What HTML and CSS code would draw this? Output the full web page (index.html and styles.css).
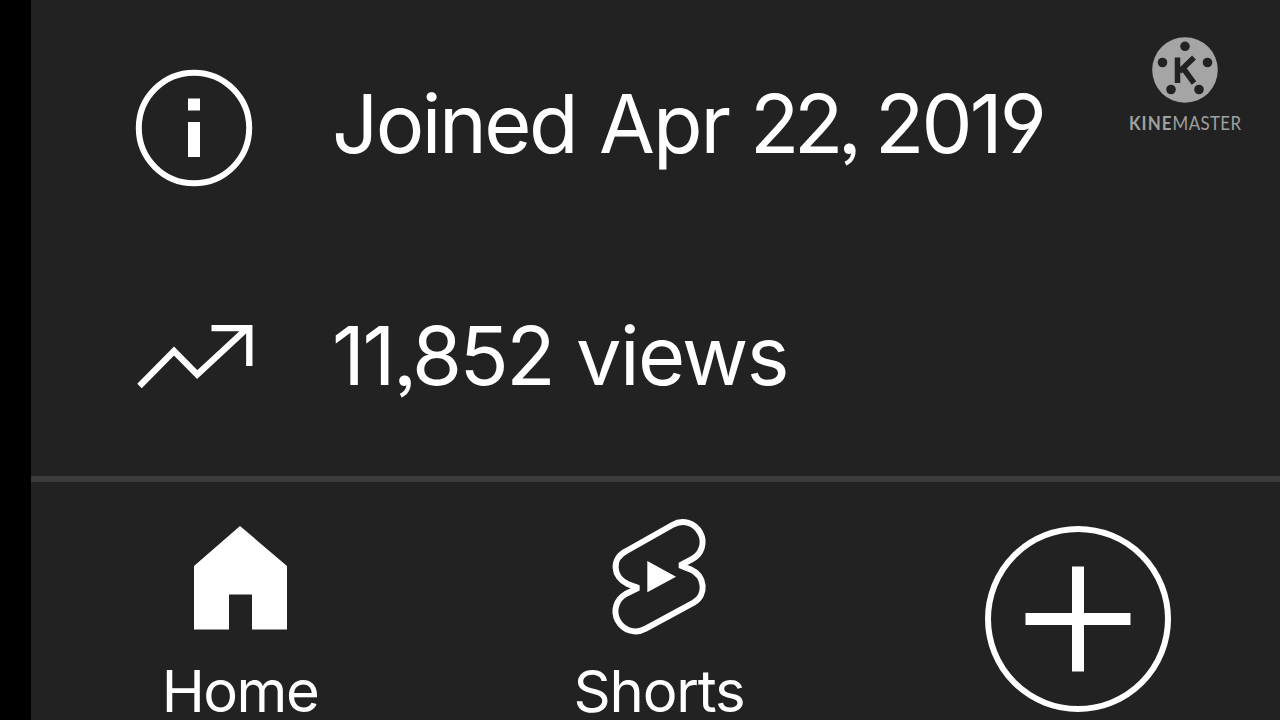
FILE: index.html
```html
<!DOCTYPE html>
<html lang="en">
<head>
<meta charset="utf-8">
<title>Channel details</title>
<link rel="stylesheet" href="styles.css">
</head>
<body>
<main class="screen">
  <section class="details">
    <div class="row">
      <svg class="row-icon" viewBox="0 0 120 120"><circle cx="60" cy="60" r="55.200" fill="none" stroke="#fff" stroke-width="6"/><path fill="#fff" d="M54 30.500h12v12H54zM54 54h12v35H54z"/></svg>
      <p class="row-text"><span class="joined">Joined</span> <span class="month">Apr</span> <span class="day">22,</span> <span class="year">2019</span></p>
    </div>
    <div class="row">
      <svg class="row-icon" viewBox="0 2.500 120 120"><path d="M5.500 88.500L40 53.500L63.200 77L114 30M77.500 30.700H115.300V68.500" fill="none" stroke="#fff" stroke-width="6.300"/></svg>
      <p class="row-text"><span class="count">11,852</span> <span class="views">views</span></p>
    </div>
  </section>
  <nav class="tabs">
    <a class="tab">
      <svg class="tab-icon" viewBox="0 0 140 140"><path fill="#fff" d="M70 16L117 56V119.500H82V84.500H59V119.500H24V56z"/></svg>
      <span class="tab-label home">Home</span>
    </a>
    <a class="tab">
      <svg class="tab-icon" viewBox="-2 15 420 420"><path d="M110 138L248 60C280 41 316 54 332 84C347 113 336 147 308 162L276 179V183L302 193C347 213 352 270 312 293L168 371C136 389 100 376 84 346C69 317 80 283 108 267L141 251V247L114 237C69 217 64 160 110 138Z" fill="none" stroke="#fff" stroke-width="18"/><path fill="#fff" d="M173 168L259 215L173 262z"/></svg>
      <span class="tab-label shorts">Shorts</span>
    </a>
    <a class="tab create">
      <svg class="create-icon" viewBox="0 0 190 190"><circle cx="95" cy="95" r="90" fill="none" stroke="#fff" stroke-width="6"/><path d="M95 42.500V147.500M42.500 95H147.500" stroke="#fff" stroke-width="12"/></svg>
    </a>
  </nav>
  <aside class="watermark">
    <svg class="reel" viewBox="0 0 66 66"><circle cx="33" cy="33" r="32.800" fill="#a5a5a5"/><g fill="#222"><circle cx="33" cy="9.300" r="4.800"/><circle cx="10.500" cy="25.500" r="4.800"/><circle cx="55.500" cy="25.500" r="4.800"/><circle cx="19" cy="52.500" r="4.800"/><circle cx="47" cy="52.500" r="4.800"/></g><path d="M25.500 20.500V46M42 20.500L27.500 34.500M31 31L42 46" fill="none" stroke="#222" stroke-width="5.500"/></svg>
    <span class="brand"><b>KINE</b>MASTER</span>
  </aside>
</main>
</body>
</html>
```
FILE: styles.css
```css
* { box-sizing: border-box; }
body {
  margin: 0;
  background: #000;
  color: #fff;
  font-family: Inter, "Liberation Sans", sans-serif;
}
.screen {
  position: relative;
  width: 1249px;
  height: 720px;
  margin-left: 31px;
  overflow: hidden;
  background: #222;
}
.details {
  height: 482px;
  padding: 12px 0 0 103px;
  border-bottom: 6px solid #3b3b3b;
}
.row {
  display: flex;
  align-items: center;
  height: 232px;
}
.row-icon {
  flex: none;
  width: 120px;
  height: 120px;
}
.row-text {
  display: flex;
  margin: 0 0 8px 78px;
  font-size: 81px;
  font-weight: 400;
  line-height: 100px;
  white-space: nowrap;
  font-feature-settings: "ss01", "ss03";
}
.row-text span { flex: none; }
.joined { width: 267px; letter-spacing: -2.500px; }
.month { width: 151px; letter-spacing: -2px; }
.day { width: 125px; letter-spacing: -5.500px; }
.year { letter-spacing: -2.900px; }
.count { width: 244px; letter-spacing: -2.500px; }
.views { letter-spacing: -1.600px; }
.tabs {
  display: grid;
  grid-template-columns: 418px 420px 418px;
}
.tab {
  display: flex;
  flex-direction: column;
  align-items: center;
  padding-top: 28px;
}
.tab-icon {
  width: 140px;
  height: 140px;
}
.tab-label {
  margin-top: 12px;
  font-size: 58px;
  font-weight: 400;
  line-height: 58px;
}
.home { letter-spacing: -1.500px; }
.shorts { letter-spacing: -1.200px; }
.create { padding-top: 42px; }
.create-icon {
  width: 190px;
  height: 190px;
}
.watermark {
  position: absolute;
  top: 37px;
  right: 36px;
  width: 118px;
  display: flex;
  flex-direction: column;
  align-items: center;
  color: #a0a0a0;
}
.reel {
  width: 66px;
  height: 66px;
}
.brand {
  margin-top: 9px;
  font-family: Lato, sans-serif;
  font-size: 19px;
  font-weight: 400;
  line-height: 22px;
  letter-spacing: 0.400px;
  transform: scaleX(0.89);
}
.brand b { font-weight: 700; letter-spacing: 1.200px; }
```
